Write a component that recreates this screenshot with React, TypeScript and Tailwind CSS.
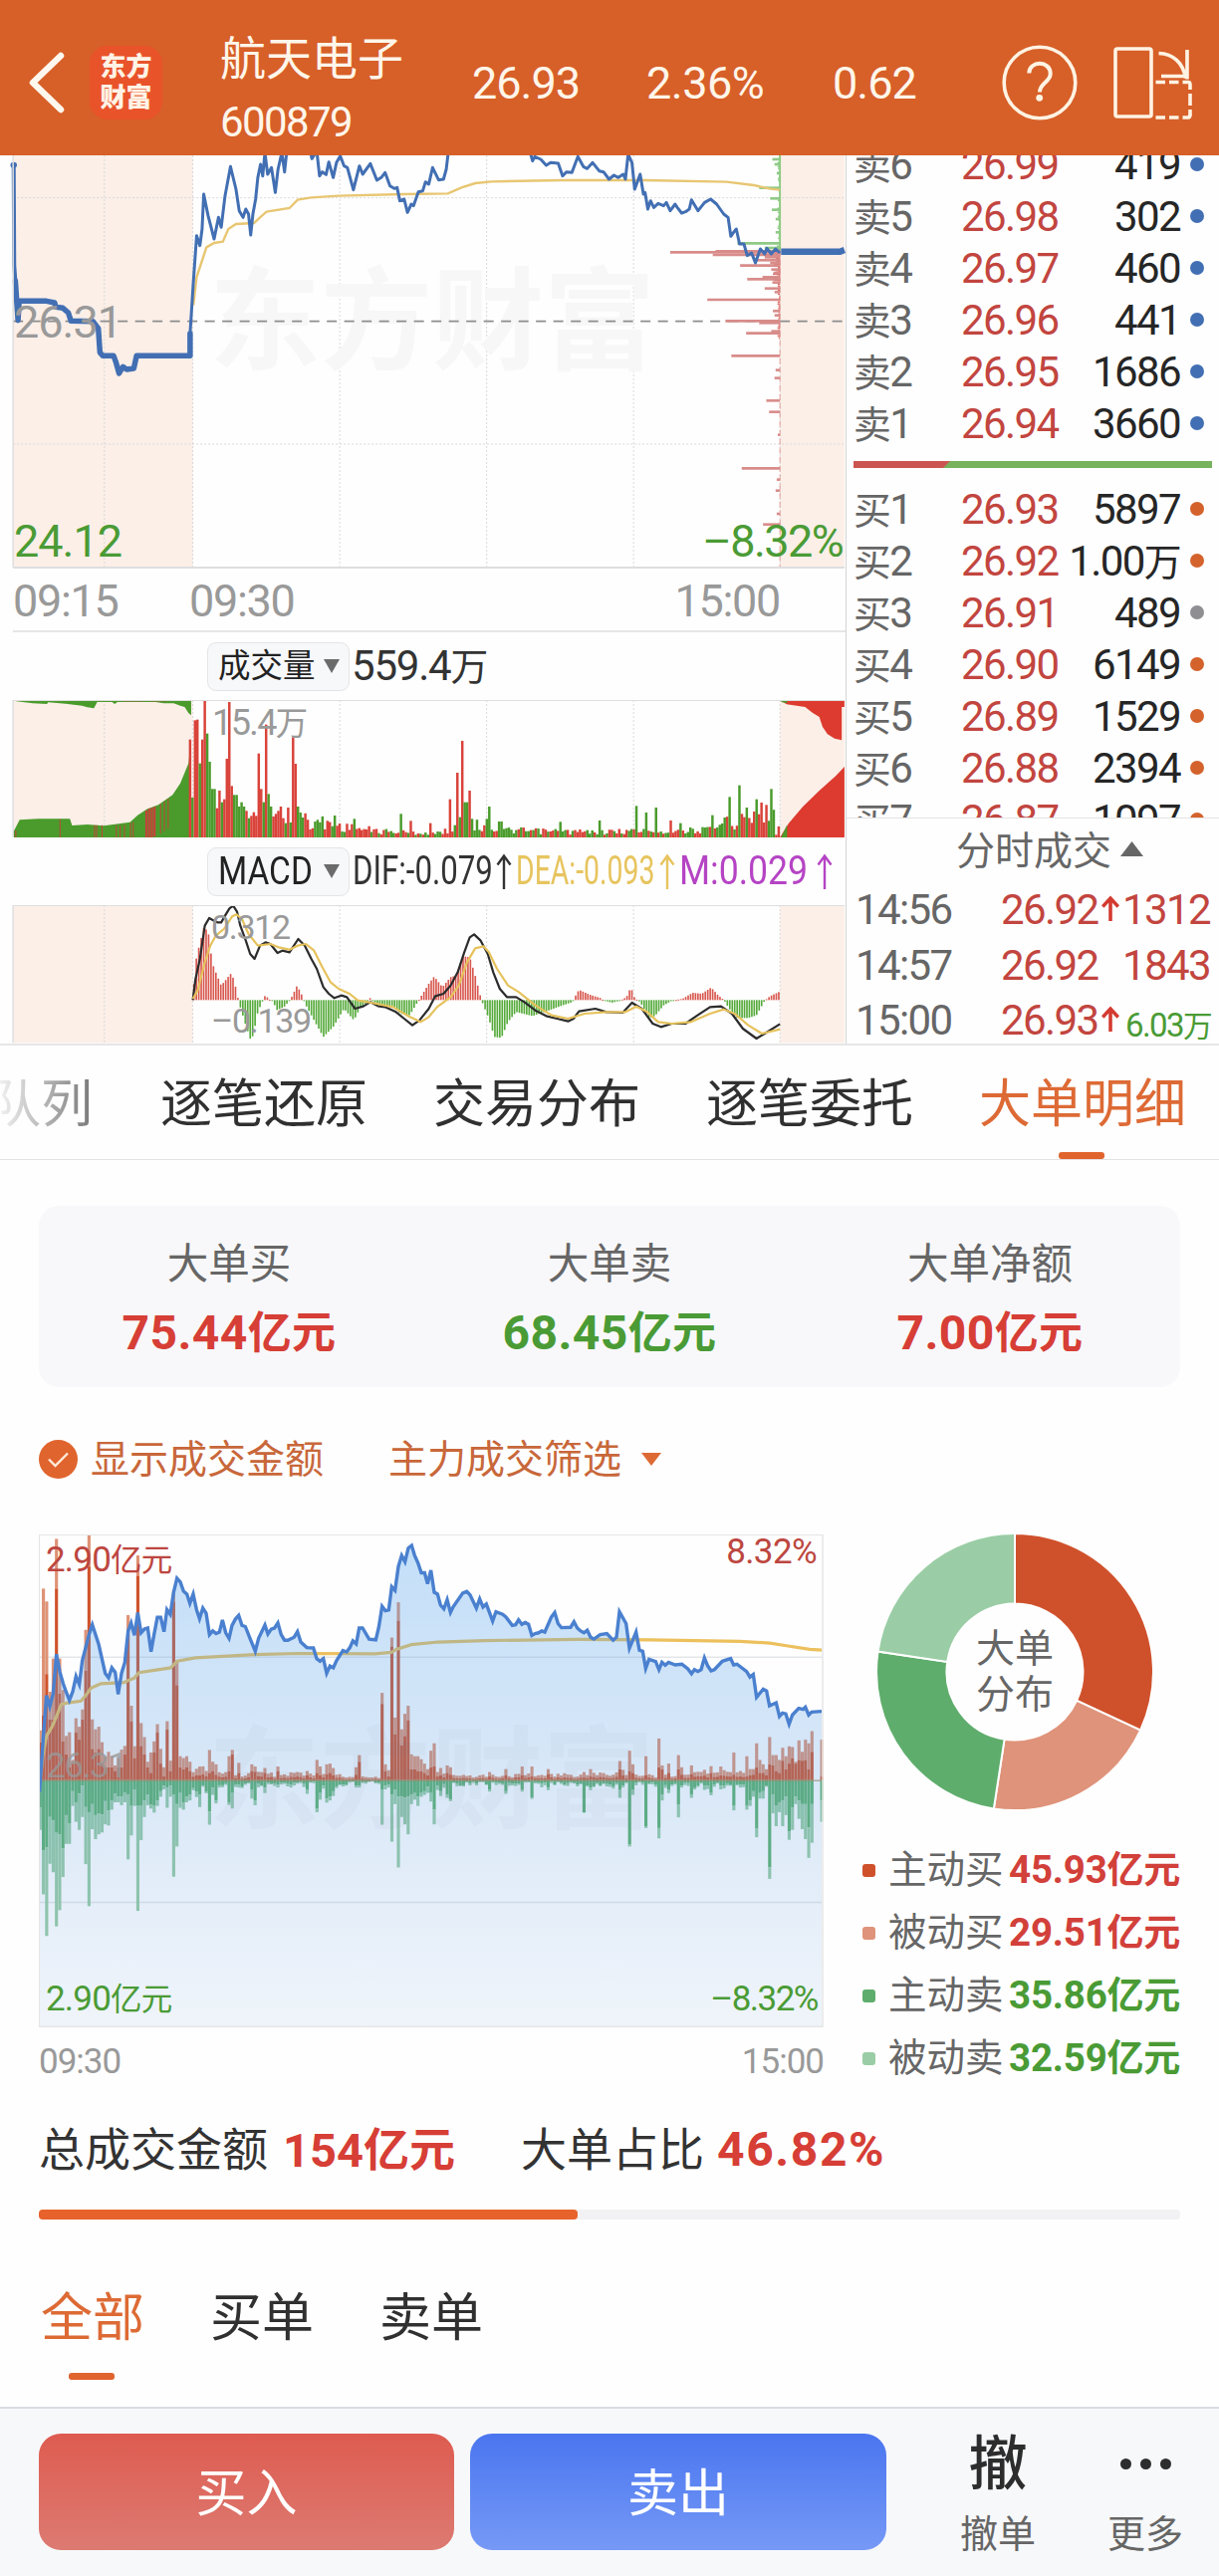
import React from "react";

type Pt = [number, number];

const pts = (s: string): Pt[] => s.trim().split(/\s+/).map((p) => p.split(",").map(Number) as Pt);

function interp(curve: Pt[], x: number): number {
  if (x <= curve[0][0]) return curve[0][1];
  for (let i = 1; i < curve.length; i++) {
    if (x <= curve[i][0]) {
      const [x0, y0] = curve[i - 1];
      const [x1, y1] = curve[i];
      return y0 + ((y1 - y0) * (x - x0)) / (x1 - x0);
    }
  }
  return curve[curve.length - 1][1];
}

function rnd(i: number, seed: number): number {
  const v = Math.sin(i * 12.9898 + seed * 78.233) * 43758.5453;
  return v - Math.floor(v);
}

/* Chinese characters are set slightly smaller than the digits beside them. */
function T({ children }: { children: string }) {
  const parts = children.split(/([\u4e00-\u9fff]+)/).filter(Boolean);
  return (
    <>
      {parts.map((p, i) =>
        /[\u4e00-\u9fff]/.test(p) ? (
          <span key={i} className="text-[0.9em] leading-none">{p}</span>
        ) : (
          <React.Fragment key={i}>{p}</React.Fragment>
        ),
      )}
    </>
  );
}

/* ---------- header ---------- */

function Header() {
  return (
    <header className="flex h-[156px] bg-[#d75f28] pt-[10px] text-[#fff6ea]">
      <div className="flex w-full items-center">
        <svg className="ml-[27px] h-[64px] w-[40px] shrink-0" viewBox="0 0 40 64" fill="none">
          <path d="M34 5L6 32L34 59" stroke="#fff8ee" strokeWidth="6.5" strokeLinecap="round" strokeLinejoin="round" />
        </svg>
        <div className="ml-[23px] flex h-[74px] w-[73px] shrink-0 flex-col items-center justify-center rounded-[18px] bg-[#e9532a] text-[26px] leading-[31px] font-black text-[#fff3e6]">
          <span>东方</span>
          <span>财富</span>
        </div>
        <div className="mt-[15px] ml-[58px] w-[200px] shrink-0">
          <div className="flex h-[64px] items-center text-[46px] leading-none">航天电子</div>
          <div className="flex h-[64px] items-center text-[42px] leading-none tracking-[-1.6px]">600879</div>
        </div>
        <div className="ml-[53px] w-[175px] shrink-0 text-[45px] leading-none tracking-[-1px]">26.93</div>
        <div className="w-[187px] shrink-0 text-[45px] leading-none tracking-[-0.5px]">2.36%</div>
        <div className="w-[170px] shrink-0 text-[45px] leading-none tracking-[-1px]">0.62</div>
        <svg className="h-[76px] w-[76px] shrink-0" viewBox="0 0 76 76" fill="none" stroke="#fff3e3" strokeWidth="3.6">
          <circle cx="38" cy="38" r="35.8" />
          <path d="M27.3 28.5C27.3 15.5 48.7 15.5 48.7 29C48.7 37.5 38 38 38 47.5" strokeWidth="4" />
          <circle cx="37.7" cy="53.3" r="3.4" fill="#fff3e3" stroke="none" />
        </svg>
        <svg className="ml-[34px] h-[76px] w-[84px] shrink-0" viewBox="0 0 84 76" fill="none" stroke="#fff3e3" strokeWidth="3.6">
          <rect x="4" y="4" width="36" height="68" rx="2" />
          <path d="M47.500 8.500C62 9 72 18 74.500 33.500M76 5V34.500M50 31.500H77.500" />
          <path d="M44.500 37.500H54M58 37.500H67.500M71.500 37.500H77Q79 37.500 79 40V45M79 49V61M79 65V71" />
          <path d="M44.500 73H54M58 73H67.500M71.500 73H77Q79 73 79 70" />
        </svg>
      </div>
    </header>
  );
}

/* ---------- intraday price ---------- */

const OPEN_AUCTION =
  "28,395 33,515 35,457 85,457 100,462 102,475 115,478 125,492 130,517 170,518 180,540 183,612 188,622 208,622 212,640 218,675 225,655 232,663 245,660 250,622 348,622 348,555";
const PRICE =
  "348,555 354,400 360,260 366,290 370,240 373,135 381,200 392,270 400,205 405,235 412,140 422,52 432,120 438,185 445,205 450,180 455,195 459,258 463,195 468,150 472,85 477,45 481,80 485,10 490,75 497,55 504,130 509,60 516,10 521,68 525,5 568,5 571,28 580,5 585,80 590,68 597,76 602,38 610,85 616,40 623,20 630,50 636,55 647,122 658,50 664,75 678,43 690,93 698,85 705,70 714,110 722,118 727,115 732,155 740,150 746,190 753,165 757,170 766,128 774,125 779,98 785,105 792,55 803,92 812,90 817,60 821,5 970,5 975,35 979,22 990,30 1000,48 1008,40 1022,42 1030,80 1037,68 1047,70 1058,22 1068,52 1075,58 1085,40 1097,65 1105,68 1115,90 1124,78 1132,85 1141,75 1145,90 1150,15 1157,40 1162,120 1172,75 1178,135 1181,130 1186,180 1191,155 1197,175 1205,163 1215,170 1220,160 1227,185 1236,165 1240,175 1248,192 1255,188 1262,180 1266,152 1278,185 1290,160 1301,150 1312,165 1325,195 1333,205 1338,262 1343,250 1348,240 1354,285 1362,285 1368,320 1376,312 1383,342 1392,300 1400,315 1404,298 1412,315 1420,300 1428,312";
const AVERAGE =
  "354,470 360,385 368,345 378,295 392,282 408,278 418,240 432,225 465,222 476,205 488,188 530,177 545,152 570,145 620,140 740,135 820,133 845,115 870,102 900,97 1030,93 1180,93 1330,98 1380,108 1410,119 1428,122";

const CHIPS: Pt[] = [
  [30, 1414], [45, 1418], [72, 1422], [116, 1390], [148, 1410], [182, 1413], [210, 1420], [250, 1420],
  [283, 1350], [297, 1400], [307, 1310], [310, 1227], [318, 1305], [325, 1400], [334, 1384], [342, 1410], [350, 1355], [362, 1412],
  [372, 1416], [385, 1396], [391, 1368], [401, 1414], [419, 1400], [430, 1418], [453, 1295], [487, 1415], [500, 1418], [517, 1328], [523, 1390], [548, 1412],
  [554, 1366], [622, 1339], [665, 1420], [689, 1418], [757, 1403], [791, 1408], [860, 1424], [961, 1358], [995, 1422], [1028, 1420], [1098, 1422], [1130, 1397],
];

function Grid({ top, bottom }: { top: number; bottom: number }) {
  return (
    <g stroke="#d9d9d9">
      {[191, 353, 622, 891, 1160, 1428].map((x) => (
        <line key={x} x1={x} x2={x} y1={top} y2={bottom} strokeDasharray="2 2" vectorEffect="non-scaling-stroke" />
      ))}
    </g>
  );
}

function Label({ className, children }: { className: string; children: string }) {
  return (
    <span className={"absolute whitespace-nowrap leading-none " + className}>
      <T>{children}</T>
    </span>
  );
}

function PriceChart() {
  const filler = Array.from({ length: 92 }, (_, i) => {
    const y = 22 + i * 6;
    const near = y > 290 && y < 400 ? 12 : 4;
    return [y, 1427 - rnd(i, 3) * near] as Pt;
  });
  return (
    <div className="relative h-[415px]">
      <svg className="block h-[415px] w-full" viewBox="0 18 1548 1245" preserveAspectRatio="none" fill="none">
        <rect x="24" y="18" width="329" height="1242" fill="#fbefe8" />
        <rect x="1428" y="18" width="118" height="1242" fill="#fbefe8" />
        <Grid top={18} bottom={1260} />
        <g stroke="#d9d9d9">
          <path d="M24 146H1546M24 888H1546" strokeDasharray="2 2" vectorEffect="non-scaling-stroke" />
        </g>
      </svg>
      <span className="absolute top-[104px] left-[210px] text-[112px] leading-[130px] font-bold text-[#f7f7f7]">东方财富</span>
      <svg className="absolute inset-0 h-[415px] w-full" viewBox="0 18 1548 1245" preserveAspectRatio="none" fill="none">
        <path d="M24 518H1546" stroke="#8d8d8d" strokeWidth="1.8" strokeDasharray="10 7.500" vectorEffect="non-scaling-stroke" />
        <path d="M1428 18V305" stroke="#8ccb80" strokeWidth="1.8" vectorEffect="non-scaling-stroke" />
        <path d="M1428 305V1260" stroke="#e3a09c" strokeWidth="1" strokeDasharray="6 3" vectorEffect="non-scaling-stroke" />
        {filler.map(([y, x]) => (
          <path key={y} d={`M${x} ${y}H1428`} stroke={y < 300 ? "#8ccb80" : "#e0706c"} strokeWidth="1.6" vectorEffect="non-scaling-stroke" />
        ))}
        <path d="M1418 306H1428V400L1424 350Z" fill="#e0605c" />
        {CHIPS.map(([y, x]) => (
          <path key={y} d={`M${x} ${y}H1428`} stroke={y < 300 ? "#8fca86" : "#d88c8a"} strokeWidth="2.6" vectorEffect="non-scaling-stroke" />
        ))}
        <polyline points={AVERAGE} stroke="#e8c672" strokeWidth="2.4" vectorEffect="non-scaling-stroke" />
        <polyline points="25,45 26,350 28,395" stroke="#426fb3" strokeWidth="4" vectorEffect="non-scaling-stroke" />
        <ellipse cx="25" cy="47" rx="6" ry="9" fill="#426fb3" />
        <polyline points={OPEN_AUCTION} stroke="#426fb3" strokeWidth="5.500" strokeLinejoin="round" strokeLinecap="round" vectorEffect="non-scaling-stroke" />
        <polyline points={PRICE} stroke="#426fb3" strokeWidth="3" strokeLinejoin="round" vectorEffect="non-scaling-stroke" />
        <polyline points="1430,308 1538,308 1546,303" stroke="#426fb3" strokeWidth="6.500" vectorEffect="non-scaling-stroke" />
        <path d="M24 18V1260" stroke="#dfdfdf" strokeWidth="1.500" vectorEffect="non-scaling-stroke" />
        <path d="M24 1260H1546" stroke="#dedede" strokeWidth="2" vectorEffect="non-scaling-stroke" />
      </svg>
      <Label className="top-[145px] left-[14px] text-[45px] tracking-[-1px] text-[#999]">26.31</Label>
      <Label className="top-[365px] left-[14px] text-[45px] tracking-[-1px] text-[#4a9b35]">24.12</Label>
      <Label className="top-[365px] right-[3px] text-[45px] tracking-[-1.6px] text-[#4a9b35]">–8.32%</Label>
    </div>
  );
}

/* ---------- volume ---------- */

const VOL_ENVELOPE = pts(
  "520,575 550,572 590,582 640,600 700,612 800,620 815,610 870,590 910,608 1000,612 1100,615 1160,610 1300,608 1330,582 1410,552 1428,560",
);
const VOL_SPIKES =
  "348,338,r 353,513,g 357,280,r 361,278,r 366,410,g 370,338,r 375,222,r 379,320,g 384,405,g 388,487,g 392,487,g 397,545,r 401,492,r 406,527,g 410,518,r 415,396,r 419,225,r 424,478,r 428,505,g 433,505,g 437,540,g 442,527,g 446,540,g 451,553,r 455,575,g 460,568,r 464,557,r 469,568,r 473,380,r 478,487,r 482,527,g 487,293,r 491,502,g 496,540,g 500,570,r 505,562,r 509,553,r 514,540,r 518,575,r 523,590,g 527,543,r 532,588,g 536,330,r 541,411,r 545,540,g 550,558,g 554,573,g 612,567,g 647,577,g 732,562,g 750,583,r 790,590,r 822,518,r 836,438,r 840,572,g 845,342,r 849,527,g 854,527,g 858,492,r 863,577,g 890,577,g 894,540,g 916,585,g 1028,586,g 1100,582,g 1163,538,g 1185,558,g 1203,543,g 1230,582,r 1248,590,g 1306,566,g 1325,573,g 1338,511,g 1355,476,g 1360,562,r 1369,543,g 1383,518,g 1387,550,r 1396,528,r 1405,535,r 1410,487,g 1414,497,r 1419,625,r 1423,633,r 1428,473,r";

function volumeBars() {
  const spikes = VOL_SPIKES.split(" ").map((s) => s.split(","));
  return Array.from({ length: 241 }, (_, i) => {
    const x = 348 + i * 4.49;
    const hit = spikes.find((s) => Math.abs(Number(s[0]) - x) < 2.26);
    const base = interp(VOL_ENVELOPE, x);
    const y = hit ? Number(hit[1]) : Math.min(628, base + (rnd(i, 1) - 0.35) * (633 - base) * 0.9);
    const red = hit ? hit[2] === "r" : rnd(i, 2) > 0.5;
    return { x, y, red };
  });
}

function PanelTitle({ name, squeeze, children }: { name: string; squeeze?: boolean; children: React.ReactNode }) {
  return (
    <div className="flex h-[68px] items-center pl-[208px]">
      <div className="flex h-[49px] w-[143px] shrink-0 items-center rounded-[9px] border border-[#e3e5e8] bg-[#f7f8fa] pl-[10px] text-[#222]">
        <span className={squeeze ? "w-[106px] origin-left scale-x-[0.88] text-[38px] leading-none" : "w-[106px] text-[32.5px] leading-none"}>{name}</span>
        <svg className="h-[14px] w-[16px]" viewBox="0 0 16 14">
          <path d="M0 0H16L8 14Z" fill="#6b6b6b" />
        </svg>
      </div>
      {children}
    </div>
  );
}

function VolumePanel() {
  return (
    <section>
      <PanelTitle name="成交量">
        <span className="ml-[2px] text-[42px] leading-none tracking-[-1.2px] text-[#333]">
          <T>559.4万</T>
        </span>
      </PanelTitle>
      <div className="relative h-[138px]">
        <svg className="block h-[138px] w-full" viewBox="0 219 1548 414" preserveAspectRatio="none" fill="none">
          <rect x="24" y="219" width="329" height="414" fill="#fbefe8" />
          <rect x="1428" y="219" width="118" height="414" fill="#fbefe8" />
          <Grid top={219} bottom={633} />
          <path d="M24 633V618L36 580L70 577H128L132 597L160 594L190 598L238 587L252 566L270 547L290 535L316 505L330 470L345 410L350 340V633Z" fill="#4a9b2c" />
          {[28, 109, 172, 176, 186, 212, 219, 227, 238, 243, 266, 271, 276, 281, 293, 300, 307].map((x) => (
            <rect key={x} x={x} y={x < 60 ? 612 : x < 150 ? 578 : x < 250 ? 596 - Math.max(0, x - 225) * 0.5 : interp(pts("250,570 270,547 290,535 316,507"), x)} width={x > 255 && x < 290 ? 4 : 1.8} height="90" fill="#c4443a" />
          ))}
          <path d="M24 219H350V265L345 258L338 240L330 236L318 229H300L285 225H215L210 231L205 225H178L172 244L160 241L150 236L120 230L88 226L86 231L60 229L30 223Z" fill="#4a9b2c" />
          <path d="M225 219H262V223H225ZM275 219H305V223H275Z" fill="#c4443a" />
          <path d="M1428 633L1444 590L1470 540L1500 492L1530 448L1546 420V633Z" fill="#dd3b2f" />
          <path d="M1430 633L1441 595V633Z" fill="#4a9b2c" />
          <path d="M1428 219H1546V240H1541V340L1528 335L1515 322L1506 300L1500 270L1488 258L1474 240L1440 232Z" fill="#dd3b2f" />
          <path d="M1427 219H1441V228L1432 226Z" fill="#4a9b2c" />
          {volumeBars().map((b) => (
            <rect key={b.x} x={b.x - 2.25} y={b.y} width="4.5" height={633 - b.y} fill={b.red ? "#d9433a" : "#4a9b2c"} />
          ))}
          <path d="M24 220H1546M24 219V633" stroke="#dedede" strokeWidth="1.500" vectorEffect="non-scaling-stroke" />
        </svg>
        <Label className="top-[5px] left-[213px] text-[36px] tracking-[-1.6px] text-[#999]">15.4万</Label>
      </div>
    </section>
  );
}

/* ---------- MACD ---------- */

const MACD_HIST = pts(
  "353,1110 360,990 365,960 374,900 383,930 388,1010 395,1040 405,1080 415,1060 422,1045 428,1060 436,1120 438,1135 450,1200 460,1250 466,1210 472,1160 480,1130 486,1108 492,1122 500,1125 506,1155 520,1145 530,1126 534,1115 544,1080 553,1110 556,1124 560,1140 580,1200 592,1235 610,1205 630,1150 648,1185 660,1145 673,1130 678,1117 683,1128 700,1145 720,1140 733,1165 750,1170 766,1126 772,1110 785,1075 795,1053 810,1085 825,1055 835,1050 848,992 860,995 870,1050 880,1115 884,1135 895,1180 905,1235 918,1238 930,1190 945,1160 975,1172 1000,1158 1030,1140 1048,1130 1054,1110 1060,1093 1080,1108 1100,1118 1104,1124 1120,1132 1135,1126 1147,1115 1155,1085 1162,1118 1172,1130 1190,1180 1200,1170 1215,1140 1230,1126 1250,1120 1268,1102 1285,1105 1302,1086 1315,1110 1325,1123 1335,1150 1350,1178 1370,1178 1385,1170 1400,1126 1410,1112 1428,1098",
);
const DIF =
  "353,1124 358,1060 366,1000 375,900 383,877 392,885 398,890 405,890 412,870 420,848 427,840 434,858 440,900 450,945 458,985 466,1000 476,960 486,950 495,955 508,982 517,975 530,980 546,940 558,960 570,1000 580,1030 592,1085 602,1105 612,1118 625,1110 635,1115 650,1150 665,1143 678,1130 692,1142 705,1145 725,1160 740,1180 755,1200 768,1185 785,1150 797,1112 812,1105 825,1080 838,1040 850,980 860,935 868,926 880,945 893,985 903,1040 915,1090 928,1115 945,1115 960,1130 980,1155 1000,1172 1020,1180 1040,1188 1050,1180 1060,1158 1090,1150 1110,1160 1140,1162 1157,1132 1175,1150 1195,1195 1210,1205 1230,1195 1255,1195 1275,1172 1300,1145 1320,1143 1340,1165 1360,1210 1385,1240 1400,1225 1428,1196";
const DEA =
  "353,1120 362,1095 375,1010 385,960 395,930 410,910 425,872 433,866 443,880 455,925 472,960 495,955 510,965 530,972 545,960 560,955 575,975 590,1025 605,1070 620,1090 640,1105 655,1125 680,1132 720,1145 745,1170 770,1190 785,1175 800,1145 825,1115 840,1080 855,1010 870,968 885,962 895,980 910,1030 930,1080 950,1100 980,1140 1010,1170 1040,1180 1070,1165 1110,1160 1145,1160 1165,1143 1185,1160 1205,1190 1230,1195 1265,1190 1300,1165 1325,1152 1345,1165 1370,1200 1395,1225 1428,1212";

function UpArrow() {
  return (
    <svg className="h-[36px] w-[16px] shrink-0" viewBox="0 0 16 36" fill="none" stroke="currentColor" strokeWidth="2.4">
      <path d="M8 36V3M1.500 11.500L8 2.500L14.500 11.500" />
    </svg>
  );
}

function MacdPanel() {
  return (
    <section>
      <PanelTitle name="MACD" squeeze>
        <div className="flex items-center text-[40px] leading-none">
          <div className="ml-[3px] flex w-[162px] items-center text-[#333]">
            <span className="w-[144px] origin-left scale-x-[0.78] whitespace-nowrap">DIF:-0.079</span>
            <UpArrow />
          </div>
          <div className="flex w-[164px] items-center pl-[2px] text-[#e7c45e]">
            <span className="w-[144px] origin-left scale-x-[0.71] whitespace-nowrap">DEA:-0.093</span>
            <UpArrow />
          </div>
          <div className="flex items-center pl-[2px] text-[#b544c4]">
            <span className="w-[138px] origin-left scale-x-[0.89] whitespace-nowrap">M:0.029</span>
            <UpArrow />
          </div>
        </div>
      </PanelTitle>
      <div className="relative h-[139px]">
        <svg className="block h-[139px] w-full" viewBox="0 838 1548 417" preserveAspectRatio="none" fill="none">
          <rect x="24" y="838" width="329" height="415" fill="#fbefe8" />
          <rect x="1428" y="838" width="118" height="415" fill="#fbefe8" />
          <Grid top={838} bottom={1253} />
          {Array.from({ length: 240 }, (_, i) => {
            const x = 355 + i * 4.48;
            const y = interp(MACD_HIST, x);
            return <rect key={i} x={x - 1.5} y={Math.min(y, 1124)} width="3" height={Math.max(3, Math.abs(y - 1124))} fill={y < 1124 ? "#d8584f" : "#55aa3a"} />;
          })}
          <polyline points={DIF} stroke="#2c2c2c" strokeWidth="2.2" strokeLinejoin="round" vectorEffect="non-scaling-stroke" />
          <polyline points={DEA} stroke="#e6c25c" strokeWidth="2.2" strokeLinejoin="round" vectorEffect="non-scaling-stroke" />
          <path d="M24 839H1546M24 838V1253" stroke="#dedede" strokeWidth="1.500" vectorEffect="non-scaling-stroke" />
        </svg>
        <Label className="top-[5px] left-[212px] text-[34px] tracking-[-1.3px] text-[#999]">0.312</Label>
        <Label className="top-[99px] left-[212px] text-[34px] tracking-[-1.3px] text-[#999]">–0.139</Label>
      </div>
    </section>
  );
}

/* ---------- order book ---------- */

const SELLS = [
  ["卖6", "26.99", "419"],
  ["卖5", "26.98", "302"],
  ["卖4", "26.97", "460"],
  ["卖3", "26.96", "441"],
  ["卖2", "26.95", "1686"],
  ["卖1", "26.94", "3660"],
];
const BUYS = [
  ["买1", "26.93", "5897"],
  ["买2", "26.92", "1.00万"],
  ["买3", "26.91", "489"],
  ["买4", "26.90", "6149"],
  ["买5", "26.89", "1529"],
  ["买6", "26.88", "2394"],
  ["买7", "26.87", "1097"],
];
const TRADES = [
  { time: "14:56", price: "26.92", up: true, vol: "1312", small: false },
  { time: "14:57", price: "26.92", up: false, vol: "1843", small: false },
  { time: "15:00", price: "26.93", up: true, vol: "6.03万", small: true },
];

function BookRow({ row, dot }: { row: string[]; dot: string }) {
  return (
    <div className="flex h-[52px] shrink-0 items-center text-[42px] leading-none tracking-[-1.6px]">
      <span className="w-[115px] shrink-0 pl-[7px] text-[#666]"><T>{row[0]}</T></span>
      <span className="text-[#c2453f]">{row[1]}</span>
      <span className="ml-auto whitespace-nowrap text-[#262626]"><T>{row[2]}</T></span>
      <span className={"mr-[15px] ml-[10px] h-[14px] w-[14px] shrink-0 -translate-y-px rounded-full " + dot} />
    </div>
  );
}

function OrderBook() {
  return (
    <aside className="flex w-[374px] flex-col">
      <div className="flex h-[296px] shrink-0 flex-col justify-end overflow-hidden">
        {SELLS.map((r) => <BookRow key={r[0]} row={r} dot="bg-[#426fb3]" />)}
      </div>
      <div className="flex h-[30px] shrink-0 items-end">
        <svg className="mb-[12px] ml-[7px] h-[7px] w-[360px]" viewBox="0 0 360 7">
          <rect width="360" height="7" fill="#77b25d" />
          <path d="M0 0H97L90 7H0Z" fill="#cd5551" />
        </svg>
      </div>
      <div className="flex h-[340px] shrink-0 flex-col overflow-hidden border-b border-[#e3e3e3] pt-[4px]">
        {BUYS.map((r) => <BookRow key={r[0]} row={r} dot={r[0] === "买3" ? "bg-[#8e8e93]" : "bg-[#d4622c]"} />)}
      </div>
      <div className="flex h-[63px] shrink-0 items-center pt-[3px] pl-[110px] text-[39px] leading-none text-[#666]">
        分时成交
        <svg className="mb-[6px] ml-[9px] h-[15px] w-[23px]" viewBox="0 0 23 15">
          <path d="M0 15L11.500 0L23 15Z" fill="#666" />
        </svg>
      </div>
      {TRADES.map((t) => (
        <div key={t.time} className="flex h-[55.5px] shrink-0 items-center pt-[3px] text-[42px] leading-none tracking-[-1.6px]">
          <span className="w-[155px] pl-[9px] text-[#666]">{t.time}</span>
          <span className="w-[101px] text-[#c2453f]">{t.price}</span>
          {t.up && (
            <svg className="-mt-[4px] h-[26px] w-[18px] shrink-0" viewBox="0 0 17 25" fill="none" stroke="#d33a30" strokeWidth="3.4">
              <path d="M8.500 25V4M1 11L8.500 3L16 11" />
            </svg>
          )}
          <span className={t.small ? "ml-auto pt-[8px] pr-[8px] text-[33px] whitespace-nowrap text-[#4a9b35]" : "ml-auto pr-[9px] text-[#c2453f]"}>
            <T>{t.vol}</T>
          </span>
        </div>
      ))}
    </aside>
  );
}

/* ---------- big-order chart ---------- */

const BIG_PRICE =
  "120,757 132,600 141,495 151,525 161,490 171,383 181,430 191,462 200,485 210,508 220,485 230,443 240,465 249,400 259,365 269,330 279,303 298,355 318,435 328,447 338,420 348,432 357,492 367,435 377,405 387,320 396,298 406,332 416,270 426,325 436,315 446,312 456,376 465,330 475,283 485,283 495,322 504,262 514,275 524,215 534,177 544,187 554,212 564,220 573,245 583,220 593,262 602,287 612,258 622,272 632,330 642,320 652,327 662,323 671,290 681,325 691,340 700,305 710,288 720,278 730,305 740,308 755,342 770,375 780,340 799,304 808,328 818,315 828,312 838,298 848,330 858,345 868,345 887,337 897,322 907,350 925,365 945,366 955,395 965,402 975,395 985,435 995,415 1005,420 1015,400 1034,373 1045,377 1055,365 1064,347 1074,355 1083,312 1093,312 1113,342 1133,344 1142,310 1152,253 1162,265 1172,263 1181,200 1191,210 1201,145 1211,115 1221,132 1231,95 1241,88 1250,115 1260,135 1270,162 1280,162 1289,192 1299,155 1309,215 1319,220 1328,250 1338,260 1348,235 1358,270 1366,255 1395,217 1407,213 1417,222 1436,258 1446,233 1456,255 1466,247 1485,293 1495,268 1515,275 1525,282 1544,305 1554,303 1563,290 1573,302 1583,297 1593,302 1603,332 1613,327 1623,325 1633,320 1642,323 1662,282 1672,270 1682,300 1692,311 1720,310 1730,295 1740,312 1750,320 1760,325 1770,318 1780,337 1790,342 1809,330 1829,327 1848,345 1858,337 1867,268 1887,300 1897,367 1917,323 1927,372 1937,375 1946,422 1956,397 1976,403 1986,425 1995,405 2005,413 2015,405 2035,412 2055,410 2073,423 2084,436 2093,425 2103,430 2113,425 2123,393 2133,415 2143,428 2153,425 2177,402 2202,395 2211,412 2221,410 2250,430 2260,445 2270,438 2280,500 2300,478 2310,483 2319,523 2339,515 2349,552 2358,543 2368,545 2378,573 2388,548 2407,530 2420,533 2427,527 2437,548 2446,540 2476,538";
const BIG_AVERAGE =
  "122,725 130,660 141,605 158,580 172,550 185,520 200,516 245,510 262,492 275,475 305,463 375,460 390,453 405,448 420,433 515,420 535,402 590,393 770,384 900,381 1130,382 1180,378 1195,370 1240,357 1320,350 1460,346 1740,343 1960,344 2230,348 2320,353 2370,360 2440,370 2476,372";

/* x, passive-buy top, active-buy top, passive-sell bottom, active-sell bottom */
const BIG_KEYS: number[][] = [
  [122, 590, 622, 860, 800], [132, 205, 550, 1035, 915], [141, 240, 437, 1148, 908], [151, 485, 560, 952, 825],
  [161, 395, 560, 975, 835], [171, 70, 205, 1122, 868], [181, 395, 490, 1078, 872], [191, 480, 620, 988, 910],
  [200, 605, 655, 898, 820], [210, 595, 690, 898, 842], [220, 670, 680, 795, 755], [230, 557, 595, 838, 785],
  [240, 580, 615, 860, 762], [249, 533, 560, 825, 740], [259, 317, 428, 953, 798], [269, 58, 145, 1067, 812],
  [279, 560, 640, 858, 790], [289, 587, 650, 885, 820], [298, 580, 640, 872, 815], [308, 622, 680, 867, 818],
  [318, 660, 690, 845, 782], [328, 648, 690, 848, 808], [338, 660, 690, 805, 780], [348, 685, 700, 785, 762],
  [358, 665, 690, 785, 770], [367, 642, 690, 793, 770], [377, 632, 655, 785, 758], [387, 277, 320, 940, 765],
  [397, 523, 565, 875, 795], [406, 633, 665, 795, 750], [416, 115, 170, 1080, 795], [426, 570, 632, 888, 795],
  [436, 608, 655, 825, 780], [446, 675, 690, 793, 765], [456, 650, 705, 802, 792], [465, 620, 650, 813, 795],
  [475, 573, 595, 795, 780], [485, 640, 680, 770, 755], [495, 690, 715, 750, 740], [504, 565, 587, 800, 745],
  [514, 672, 700, 770, 740], [524, 210, 240, 987, 765], [534, 400, 467, 905, 790], [544, 660, 690, 800, 760],
  [554, 665, 695, 805, 785], [564, 660, 690, 785, 770], [573, 675, 700, 780, 765], [602, 688, 712, 798, 765],
  [632, 643, 705, 846, 810], [642, 675, 700, 765, 745], [652, 682, 710, 788, 780], [691, 660, 700, 792, 785],
  [700, 643, 655, 802, 760], [720, 678, 705, 745, 738], [760, 682, 700, 775, 750], [770, 688, 702, 793, 780],
  [799, 692, 705, 760, 745], [838, 688, 700, 745, 738], [926, 700, 712, 762, 750], [955, 670, 705, 812, 803],
  [965, 688, 712, 778, 760], [985, 682, 708, 786, 775], [995, 680, 705, 780, 770], [1005, 692, 712, 768, 755],
  [1074, 690, 710, 745, 740], [1083, 657, 675, 745, 740], [1152, 488, 518, 846, 750], [1162, 682, 700, 750, 740],
  [1172, 698, 715, 745, 738], [1181, 338, 362, 892, 765], [1191, 555, 600, 790, 750], [1201, 242, 292, 962, 770],
  [1211, 587, 630, 825, 770], [1221, 545, 605, 845, 772], [1231, 523, 562, 872, 770], [1241, 655, 695, 790, 765],
  [1250, 660, 695, 778, 760], [1260, 660, 700, 795, 770], [1270, 668, 700, 770, 760], [1280, 680, 705, 765, 755],
  [1299, 645, 690, 783, 760], [1309, 625, 687, 845, 805], [1328, 692, 712, 768, 755], [1348, 685, 705, 773, 765],
  [1358, 690, 710, 782, 778], [1475, 703, 715, 756, 750], [1525, 695, 712, 762, 755], [1573, 688, 712, 756, 750],
  [1603, 688, 715, 776, 772], [1652, 695, 708, 752, 745], [1760, 703, 718, 813, 813], [1780, 695, 715, 752, 745],
  [1867, 673, 695, 773, 750], [1877, 697, 712, 745, 740], [1897, 645, 700, 905, 900], [1907, 682, 705, 765, 750],
  [1946, 660, 712, 855, 850], [1986, 612, 690, 883, 855], [1995, 685, 695, 780, 765], [2015, 680, 705, 760, 750],
  [2044, 657, 695, 826, 792], [2054, 690, 710, 745, 740], [2084, 685, 708, 773, 765], [2143, 687, 705, 766, 760],
  [2172, 688, 712, 750, 740], [2211, 650, 710, 807, 795], [2231, 700, 715, 745, 738], [2250, 660, 715, 805, 795],
  [2260, 695, 712, 795, 780], [2270, 695, 710, 770, 755], [2280, 625, 690, 880, 857], [2290, 670, 705, 775, 760],
  [2300, 682, 705, 775, 755], [2319, 608, 682, 993, 962], [2329, 657, 685, 815, 765], [2339, 657, 700, 850, 795],
  [2349, 670, 705, 812, 785], [2358, 637, 672, 850, 780], [2368, 660, 695, 820, 770], [2378, 633, 680, 887, 865],
  [2388, 635, 665, 860, 800], [2398, 675, 680, 790, 770], [2407, 617, 670, 830, 780], [2417, 648, 672, 858, 790],
  [2427, 615, 670, 885, 790], [2437, 625, 695, 936, 853], [2446, 592, 648, 895, 790], [2456, 725, 725, 725, 725],
  [2466, 725, 725, 725, 725], [2476, 615, 715, 838, 780],
];
const BIG_QUIET = pts("570,42 640,30 700,20 850,18 1000,20 1060,10 1140,8 1240,60 1350,20 1420,14 1700,16 1850,20 1960,14 2100,24 2250,22 2330,50 2476,60");

function bigBars(): number[][] {
  return Array.from({ length: 241 }, (_, i) => {
    const x = 122 + i * 9.81;
    const hit = BIG_KEYS.find((k) => Math.abs(k[0] - x) < 4.9);
    if (hit) return [x, ...hit.slice(1)];
    const q = interp(BIG_QUIET, x);
    const up = q * (0.5 + rnd(i, 5) * 0.7);
    const down = q * (0.35 + rnd(i, 6) * 0.9);
    return [x, 725 - up, 725 - up * 0.45, 725 + down, 725 + down * (0.5 + rnd(i, 8) * 0.4)];
  });
}

function BigOrderChart() {
  const bars = bigBars();
  return (
    <div className="relative h-[495px] w-[788px]">
      <svg className="block h-[495px] w-[788px]" viewBox="118 58 2364 1338" preserveAspectRatio="none" fill="none">
        <defs>
          <linearGradient id="area" x1="0" y1="80" x2="0" y2="1395" gradientUnits="userSpaceOnUse">
            <stop offset="0" stopColor="#4fa3ef" stopOpacity="0.34" />
            <stop offset="0.5" stopColor="#5c9de2" stopOpacity="0.23" />
            <stop offset="1" stopColor="#6f9fdd" stopOpacity="0.1" />
          </linearGradient>
        </defs>
        <path d="M118 391H2479M118 1057H2479" stroke="#e3e5e8" strokeWidth="1.500" vectorEffect="non-scaling-stroke" />
        {bars.map(([x, lt, dt, lb, db]) => (
          <g key={x}>
            <rect x={x - 4.7} y={lt} width="9.4" height={dt - lt} fill="#de9275" />
            <rect x={x - 4.7} y={dt} width="9.4" height={725 - dt} fill="#cf532b" />
            <rect x={x - 4.7} y={725} width="9.4" height={db - 725} fill="#5cb06c" />
            <rect x={x - 4.7} y={db} width="9.4" height={lb - db} fill="#97cba3" />
          </g>
        ))}
        <polyline points={BIG_AVERAGE} stroke="#ecc05d" strokeWidth="3.2" vectorEffect="non-scaling-stroke" />
        <polygon points={`120,1395 ${BIG_PRICE} 2476,1395`} fill="url(#area)" />
        <path d="M120 726H2476" stroke="#9a8a6c" strokeWidth="1" vectorEffect="non-scaling-stroke" />
        <polyline points={BIG_PRICE} stroke="#4a80cf" strokeWidth="3.4" vectorEffect="non-scaling-stroke" />
        <rect x="119" y="59" width="2360" height="1335" stroke="#e6e6e6" strokeWidth="1.500" vectorEffect="non-scaling-stroke" />
      </svg>
      <span className="absolute top-[184px] left-[170px] text-[112px] leading-[130px] font-bold text-[#6b7f95]/[0.045]">东方财富</span>
      <Label className="top-[8px] left-[7px] text-[35px] tracking-[-0.8px] text-[#bd4640]">2.90亿元</Label>
      <Label className="top-[0px] right-[7px] text-[35px] tracking-[-0.6px] text-[#bd4640]">8.32%</Label>
      <Label className="top-[215px] left-[7px] text-[35px] tracking-[-1.500px] text-[#999]/80">26.31</Label>
      <Label className="top-[449px] left-[7px] text-[35px] tracking-[-0.8px] text-[#4a9b35]">2.90亿元</Label>
      <Label className="top-[449px] right-[6px] text-[35px] tracking-[-1.500px] text-[#4a9b35]">–8.32%</Label>
    </div>
  );
}

/* ---------- donut ---------- */

const SHARES = [
  { name: "主动买", value: 45.93, fill: "#cf512b", swatch: "bg-[#cf512b]", text: "text-[#d2403a]" },
  { name: "被动买", value: 29.51, fill: "#df937a", swatch: "bg-[#df937a]", text: "text-[#d2403a]" },
  { name: "主动卖", value: 35.86, fill: "#5fad6c", swatch: "bg-[#5fad6c]", text: "text-[#4a9b35]" },
  { name: "被动卖", value: 32.59, fill: "#9acda5", swatch: "bg-[#9acda5]", text: "text-[#4a9b35]" },
];

function Donut() {
  const total = SHARES.reduce((a, s) => a + s.value, 0);
  let acc = 0;
  const at = (f: number, r: number) => `${140 + r * Math.sin(f * 2 * Math.PI)} ${140 - r * Math.cos(f * 2 * Math.PI)}`;
  return (
    <div className="relative -mt-[2px] ml-[33px] h-[280px] w-[280px]">
      <svg className="h-[280px] w-[280px]" viewBox="0 0 280 280">
        {SHARES.map((s) => {
          const a = acc / total;
          acc += s.value;
          const b = acc / total;
          return (
            <path key={s.name} fill={s.fill} stroke="#fff" strokeWidth="2" d={`M${at(a, 139)}A139 139 0 0 1 ${at(b, 139)}L${at(b, 68.5)}A68.5 68.5 0 0 0 ${at(a, 68.5)}Z`} />
          );
        })}
      </svg>
      <div className="absolute inset-0 flex flex-col items-center justify-center text-[39px] leading-[46px] text-[#666]">
        <span>大单</span>
        <span>分布</span>
      </div>
    </div>
  );
}

/* ---------- page ---------- */

const STATS = [
  { name: "大单买", value: "75.44", color: "text-[#d63e36]" },
  { name: "大单卖", value: "68.45", color: "text-[#4a9b35]" },
  { name: "大单净额", value: "7.00", color: "text-[#d63e36]" },
];

export default function App() {
  return (
    <div className="flex h-[2587px] w-[1224px] flex-col overflow-hidden bg-[#fefefe] font-['Roboto','Noto_Sans_CJK_SC',sans-serif]">
      <Header />

      <div className="flex h-[894px] border-b-2 border-[#e6e6e6]">
        <div className="flex w-[850px] flex-col border-r-[1.5px] border-[#d4d4d4]">
          <PriceChart />
          <div className="ml-[13px] flex h-[65px] items-center border-b-2 border-[#e6e6e6] pt-[2px] text-[45px] leading-none tracking-[-1.3px] text-[#999]">
            <span className="w-[177px]">09:15</span>
            <span>09:30</span>
            <span className="mr-[66px] ml-auto">15:00</span>
          </div>
          <VolumePanel />
          <MacdPanel />
        </div>
        <OrderBook />
      </div>

      <nav className="flex h-[115px] items-center gap-[66px] border-b border-[#e2e2e2] text-[52px] leading-none text-[#303030]">
        <span className="mt-[6px] -ml-[11px] w-[106px] shrink-0 bg-gradient-to-r from-white to-[#777] bg-clip-text text-transparent">队列</span>
        {["逐笔还原", "交易分布", "逐笔委托"].map((t) => (
          <span key={t} className="mt-[6px] w-[208px] shrink-0">{t}</span>
        ))}
        <span className="relative flex h-full shrink-0 items-center pt-[6px] text-[#dd6a35]">
          大单明细
          <i className="absolute bottom-0 left-[80px] h-[7px] w-[46px] rounded-[3px] bg-[#e0642e]" />
        </span>
      </nav>

      <section className="mx-[39px] mt-[46px] grid h-[182px] grid-cols-3 rounded-[20px] bg-[#f8f8fa]">
        {STATS.map((s) => (
          <div key={s.name} className="flex flex-col items-center pt-[34px]">
            <span className="flex h-[50px] items-center text-[41.5px] leading-none text-[#666]">{s.name}</span>
            <span className={"mt-[14px] flex h-[60px] items-center text-[48px] leading-none font-bold tracking-[0.4px] " + s.color}>
              {s.value}
              <span className="text-[44px]">亿元</span>
            </span>
          </div>
        ))}
      </section>

      <div className="mt-[47px] ml-[39px] flex h-[50px] items-center text-[39px] leading-none text-[#c8673a]">
        <svg className="h-[39px] w-[39px]" viewBox="0 0 39 39" fill="none">
          <circle cx="19.500" cy="19.500" r="19.500" fill="#e0642e" />
          <path d="M10 19.500L16.500 26L29 13.500" stroke="#ffe9d8" strokeWidth="2.400" />
        </svg>
        <span className="mt-[3px] ml-[13px] w-[299px]">显示成交金额</span>
        <span className="mt-[3px] w-[254px]">主力成交筛选</span>
        <svg className="h-[13px] w-[20px]" viewBox="0 0 20 13">
          <path d="M0 0H20L10 13Z" fill="#dd6a35" />
        </svg>
      </div>

      <section className="mt-[51px] ml-[39px] flex h-[557px]">
        <div className="w-[788px]">
          <BigOrderChart />
          <div className="flex h-[68px] items-center justify-between text-[35px] leading-none tracking-[-1px] text-[#999]">
            <span>09:30</span>
            <span>15:00</span>
          </div>
        </div>
        <div className="ml-[19px] flex-1">
          <Donut />
          <div className="mt-[28px] ml-[20px]">
            {SHARES.map((s) => (
              <div key={s.name} className="flex h-[63px] items-center text-[38.5px] leading-none">
                <i className={"h-[13px] w-[13px] rounded-[3px] " + s.swatch} />
                <span className="ml-[13px] w-[121px] text-[#666]">{s.name}</span>
                <span className={"flex items-center font-bold whitespace-nowrap tracking-[-0.2px] " + s.text}>
                  {s.value.toFixed(2)}
                  <span className="text-[37px]">亿元</span>
                </span>
              </div>
            ))}
          </div>
        </div>
      </section>

      <div className="mt-[33px] ml-[39px] flex h-[56px] items-center text-[46px] leading-none text-[#333]">
        <span>总成交金额</span>
        <span className="ml-[15px] flex w-[239px] items-center text-[47px] font-bold text-[#d63e36]">154<span className="text-[46px]">亿元</span></span>
        <span>大单占比</span>
        <span className="ml-[13px] text-[48px] font-bold tracking-[1.6px] text-[#d63e36]">46.82%</span>
      </div>
      <div className="mx-[39px] mt-[32px] h-[10px] rounded-[4px] bg-[#f2f2f4]">
        <div className="h-full w-[47.2%] rounded-[4px] bg-[#e8622c]" />
      </div>

      <div className="mt-[65px] ml-[41px] flex h-[96px] gap-[66px] text-[52px] leading-none text-[#303030]">
        <span className="relative flex h-[70px] items-center text-[#dd6a35]">
          全部
          <i className="absolute top-[89px] left-[28px] h-[7px] w-[46px] rounded-[3px] bg-[#e0642e]" />
        </span>
        <span className="flex h-[70px] items-center">买单</span>
        <span className="flex h-[70px] items-center">卖单</span>
      </div>

      <footer className="mt-auto flex h-[170px] border-t-2 border-[#d9dce1] bg-[#f7f8fa] pt-[25px] pl-[39px]">
        <button className="h-[117px] w-[417px] rounded-[22px] bg-gradient-to-b from-[#de5b50] to-[#dc7a72] pt-[3px] text-[51px] leading-none text-white">买入</button>
        <button className="ml-[16px] h-[117px] w-[418px] rounded-[22px] bg-gradient-to-b from-[#4a75ef] to-[#7699f6] pt-[3px] text-[51px] leading-none text-white">卖出</button>
        <div className="ml-[54px] flex w-[116px] flex-col items-center text-[#666]">
          <span className="flex h-[60px] items-center text-[59px] leading-none font-medium text-[#2d2d2d]">撤</span>
          <span className="mt-[16px] text-[38px] leading-[50px]">撤单</span>
        </div>
        <div className="ml-[32px] flex w-[116px] flex-col items-center text-[#666]">
          <span className="flex h-[60px] items-center gap-[9px]">
            <i className="h-[11px] w-[11px] rounded-full bg-[#2d2d2d]" />
            <i className="h-[11px] w-[11px] rounded-full bg-[#2d2d2d]" />
            <i className="h-[11px] w-[11px] rounded-full bg-[#2d2d2d]" />
          </span>
          <span className="mt-[16px] text-[38px] leading-[50px]">更多</span>
        </div>
      </footer>
    </div>
  );
}
